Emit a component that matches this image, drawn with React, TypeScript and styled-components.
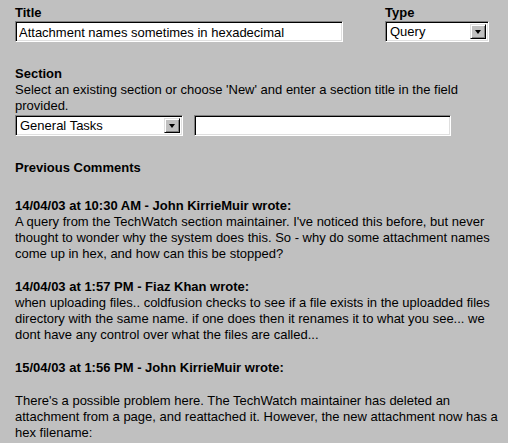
import styled, { createGlobalStyle } from 'styled-components';

const GlobalStyle = createGlobalStyle`
  html, body {
    margin: 0;
    padding: 0;
    background: #c0c0c0;
  }
  body {
    font-family: 'Liberation Sans', Arial, sans-serif;
    font-size: 13px;
    line-height: 16px;
    color: #000;
    overflow: hidden;
  }
`;

type Comment = {
  when: string;
  author: string;
  body: string;
  leadingBreak?: boolean;
};

const comments: Comment[] = [
  {
    when: '14/04/03 at 10:30 AM',
    author: 'John KirrieMuir',
    body: "A query from the TechWatch section maintainer. I've noticed this before, but never thought to wonder why the system does this. So - why do some attachment names come up in hex, and how can this be stopped?",
  },
  {
    when: '14/04/03 at 1:57 PM',
    author: 'Fiaz Khan',
    body: 'when uploading files.. coldfusion checks to see if a file exists in the uploadded files directory with the same name. if one does then it renames it to what you see... we dont have any control over what the files are called...',
  },
  {
    when: '15/04/03 at 1:56 PM',
    author: 'John KirrieMuir',
    body: "There's a possible problem here. The TechWatch maintainer has deleted an attachment from a page, and reattached it. However, the new attachment now has a hex filename:",
    leadingBreak: true,
  },
];

function App() {
  return (
    <Page>
      <GlobalStyle />
      <TopRow>
        <Field>
          <Label>Title</Label>
          <TextBox width={328} defaultValue="Attachment names sometimes in hexadecimal" />
        </Field>
        <Field>
          <Label>Type</Label>
          <Dropdown width={104} value="Query" options={['Query', 'Bug', 'Request']} />
        </Field>
      </TopRow>

      <SectionBlock>
        <Label>Section</Label>
        <Hint>
          Select an existing section or choose 'New' and enter a section title in the field provided.
        </Hint>
        <SectionRow>
          <Dropdown width={168} value="General Tasks" options={['General Tasks', 'New']} />
          <TextBox width={257} defaultValue="" />
        </SectionRow>
      </SectionBlock>

      <Heading>Previous Comments</Heading>

      <CommentList>
        {comments.map((c, i) => (
          <CommentItem key={i}>
            <CommentHead>
              {c.when} - {c.author} wrote:
            </CommentHead>
            <CommentBody gap={c.leadingBreak}>{c.body}</CommentBody>
          </CommentItem>
        ))}
      </CommentList>
    </Page>
  );
}

type DropdownProps = { width: number; value: string; options: string[] };

function Dropdown({ width, value, options }: DropdownProps) {
  return (
    <SelectFrame style={{ width }}>
      <SelectField defaultValue={value}>
        {options.map(o => (
          <option key={o}>{o}</option>
        ))}
      </SelectField>
      <ArrowButton>
        <Arrow />
      </ArrowButton>
    </SelectFrame>
  );
}

const Page = styled.div`
  width: 508px;
  box-sizing: border-box;
  padding: 5px 0 0 15px;
`;

const TopRow = styled.div`
  display: flex;
  gap: 42px;
`;

const Field = styled.div`
  display: flex;
  flex-direction: column;
`;

const Label = styled.div`
  font-weight: bold;
  line-height: 16px;
`;

const sunken = `
  box-sizing: border-box;
  height: 21px;
  border: 1px solid;
  border-color: #808080 #ffffff #ffffff #808080;
  box-shadow: inset 1px 1px #000000, inset -1px -1px #dfdfdf;
  background: #ffffff;
`;

const TextBox = styled.input.attrs({ type: 'text' })<{ width: number }>`
  ${sunken}
  width: ${p => p.width}px;
  margin: 0;
  padding: 1px 3px 0;
  font-family: 'Liberation Sans', Arial, sans-serif;
  font-size: 13px;
  color: #000;
  outline: none;
`;

const SelectFrame = styled.div`
  ${sunken}
  display: flex;
  align-items: stretch;
  padding: 2px;
`;

const SelectField = styled.select`
  flex: 1;
  min-width: 0;
  appearance: none;
  border: none;
  background: transparent;
  margin: 0;
  padding: 0 0 0 2px;
  font-family: 'Liberation Sans', Arial, sans-serif;
  font-size: 13px;
  color: #000;
  outline: none;
`;

const ArrowButton = styled.span`
  width: 16px;
  box-sizing: border-box;
  display: flex;
  align-items: center;
  justify-content: center;
  background: #c0c0c0;
  border: 1px solid;
  border-color: #dfdfdf #000000 #000000 #dfdfdf;
  box-shadow: inset 1px 1px #ffffff, inset -1px -1px #808080;
`;

const Arrow = styled.span`
  width: 0;
  height: 0;
  border-left: 3.5px solid transparent;
  border-right: 3.5px solid transparent;
  border-top: 4px solid #000;
  margin-top: 1px;
`;

const SectionBlock = styled.div`
  margin-top: 24px;
`;

const Hint = styled.div`
  width: 470px;
  margin-bottom: 1px;
`;

const SectionRow = styled.div`
  display: flex;
  gap: 11px;
`;

const Heading = styled.div`
  font-weight: bold;
  margin-top: 24px;
`;

const CommentList = styled.div`
  margin-top: 22px;
  display: flex;
  flex-direction: column;
  gap: 17px;
  width: 485px;
`;

const CommentItem = styled.div``;

const CommentHead = styled.div`
  font-weight: bold;
`;

const CommentBody = styled.div<{ gap?: boolean }>`
  margin-top: ${p => (p.gap ? '17px' : '0')};
`;

export default App;
